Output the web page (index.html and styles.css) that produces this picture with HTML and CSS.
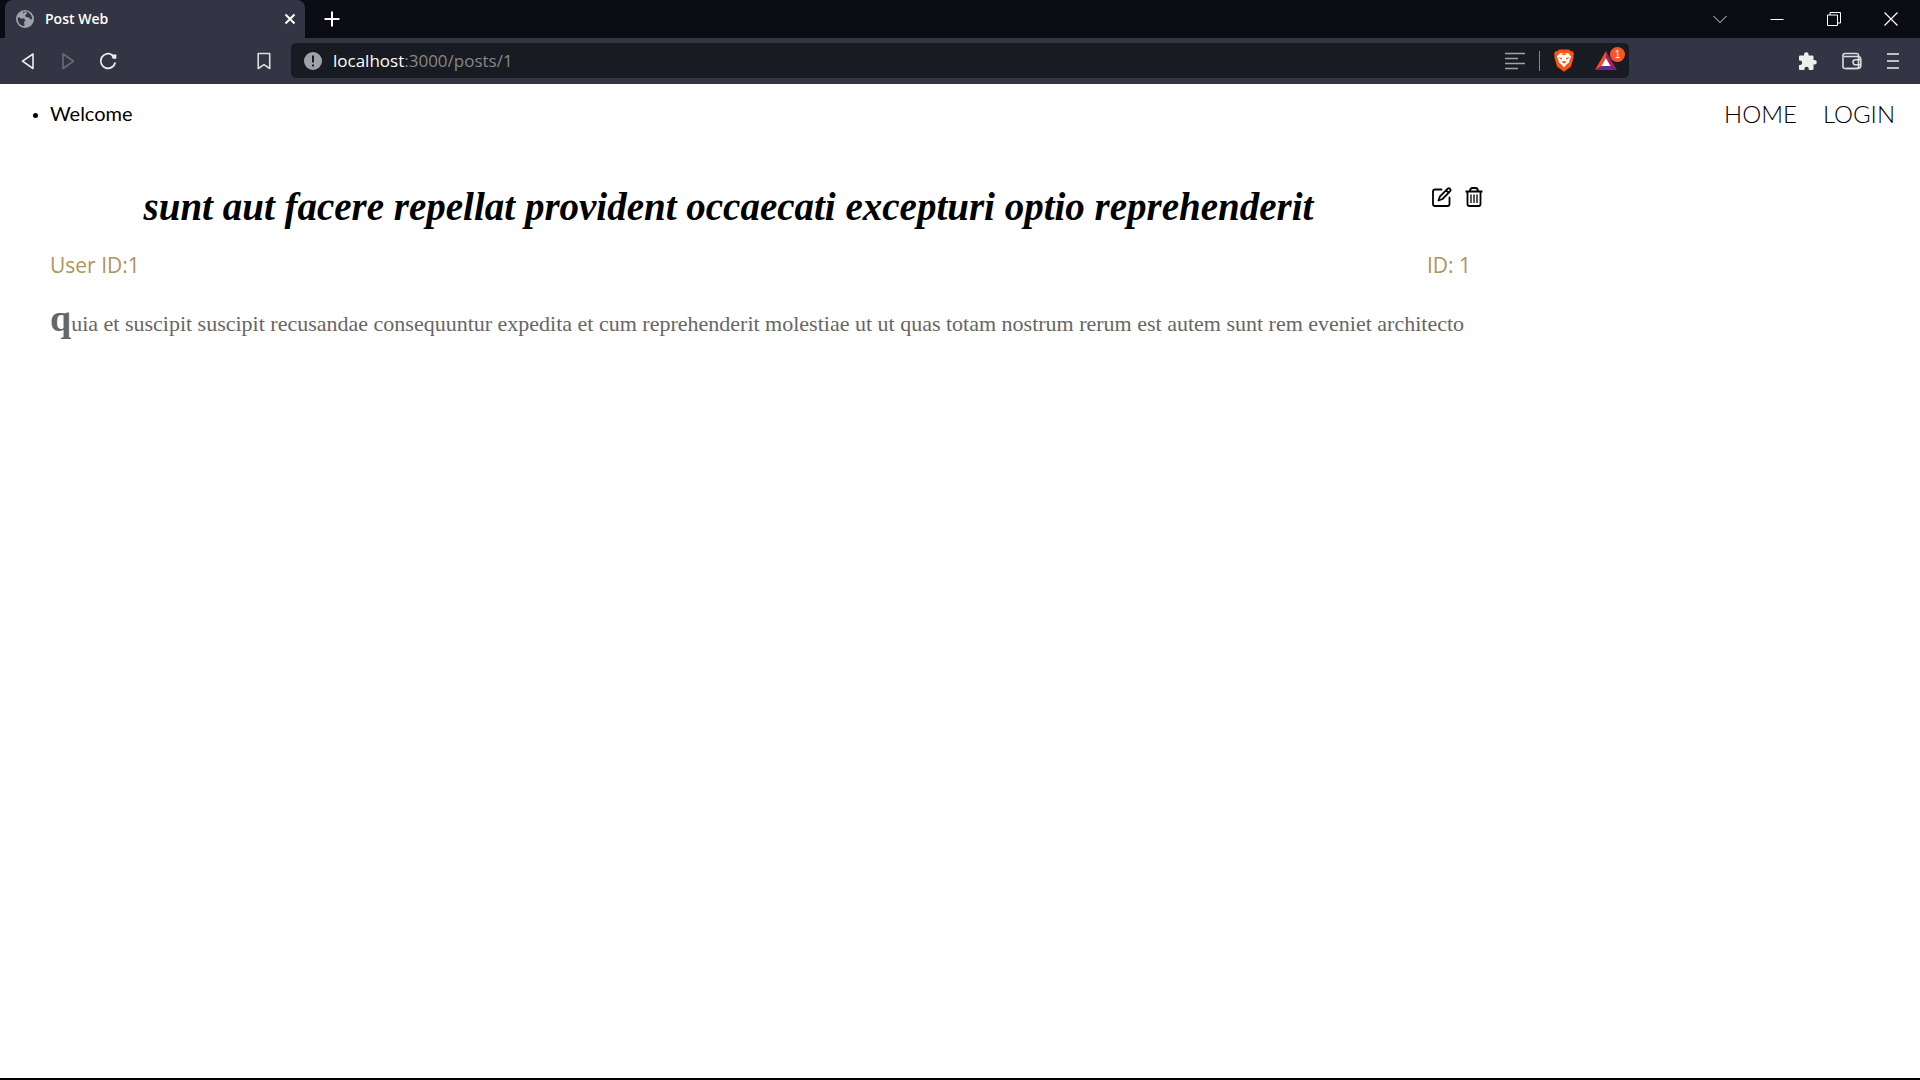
FILE: index.html
```html
<!DOCTYPE html>
<html lang="en">
<head>
<meta charset="utf-8">
<title>Post Web</title>
<link rel="stylesheet" href="styles.css">
</head>
<body>
<header class="browser">
  <div class="tabs">
    <div class="tab">
      <svg class="icon" width="18" height="18" viewBox="0 0 18 18"><circle cx="9" cy="9" r="9" fill="#a0a2aa"/><path d="M2 7L5 8.500 8 8.500 9.500 10.500 8 12 8.500 16C5 16 2 13.500 1.800 9zM7 1.800L10 1.500 11 3.500 9 5.500 10 7 13 7.500 14.500 9.500 16.200 9C16 5 13 2 10 1.500L7 3.500z" fill="#333544"/></svg>
      <span class="tab-title">Post Web</span>
      <button class="tool" aria-label="Close tab"><svg width="12" height="12" viewBox="0 0 12 12" fill="none" stroke="#fff" stroke-width="2"><path d="M1.500 1.500l9 9M10.500 1.500l-9 9"/></svg></button>
    </div>
    <button class="tool new-tab" aria-label="New tab"><svg width="16" height="16" viewBox="0 0 16 16" fill="none" stroke="#fff" stroke-width="2"><path d="M8 .5v15M.5 8h15"/></svg></button>
    <div class="window-controls">
      <button class="tool" aria-label="Search tabs"><svg width="14" height="14" viewBox="0 0 14 14" fill="none" stroke="#ddd"><path d="M.5 4L7 10.500 13.500 4"/></svg></button>
      <button class="tool" aria-label="Minimize"><svg width="14" height="14" viewBox="0 0 14 14" fill="none" stroke="#fff"><path d="M.5 7.500h13"/></svg></button>
      <button class="tool" aria-label="Restore"><svg width="14" height="14" viewBox="0 0 14 14" fill="none" stroke="#fff"><path d="M.5 3h10v10.500H.500zM3 3V.500h10.500V11h-3"/></svg></button>
      <button class="tool" aria-label="Close"><svg width="14" height="14" viewBox="0 0 14 14" fill="none" stroke="#fff" stroke-width="1.200"><path d="M.5.5l13 13M13.500.5l-13 13"/></svg></button>
    </div>
  </div>
  <div class="toolbar">
    <nav class="history" aria-label="History">
      <button class="tool" aria-label="Back"><svg width="18" height="18" viewBox="0 0 18 18" fill="none" stroke="#eee" stroke-width="1.600" stroke-linejoin="round"><path d="M14 2v14.500L3.500 9.200z"/></svg></button>
      <button class="tool" aria-label="Forward"><svg width="18" height="18" viewBox="0 0 18 18" fill="none" stroke="#6a6c78" stroke-width="1.600" stroke-linejoin="round"><path d="M4 2v14.500L14.500 9.200z"/></svg></button>
      <button class="tool" aria-label="Reload"><svg width="18" height="18" viewBox="0 0 18 18" fill="none" stroke="#eee" stroke-width="1.800"><path d="M13.500 3.200A7.300 7.300 0 1 0 16.200 10.500"/><path d="M12 2.500h5.300v4.300h-3.600z" fill="#eee" stroke="none"/></svg></button>
    </nav>
    <button class="tool bookmark" aria-label="Bookmark"><svg width="14" height="18" viewBox="0 0 14 18" fill="none" stroke="#ddd" stroke-width="1.600" stroke-linejoin="round"><path d="M1.200 1.500h11.500V16.500L7 12.700 1.200 16.500z"/></svg></button>
    <div class="address">
      <svg class="icon" width="18" height="18" viewBox="0 0 18 18"><circle cx="9" cy="9" r="9" fill="#a0a2aa"/><path d="M9 3.500v7M9 12.500v2" stroke="#191b22" stroke-width="2"/></svg>
      <a class="url" href="#"><span class="host">localhost</span>:3000/posts/1</a>
      <div class="address-tools">
        <button class="tool" aria-label="Reader mode"><svg width="20" height="18" viewBox="0 0 20 18" fill="none" stroke="#a0a2a5" stroke-width="1.600"><path d="M0 1.500h20M0 6.500h13M0 11.500h20M0 16.500h13"/></svg></button>
        <span class="divider"></span>
        <button class="tool shield" aria-label="Shields"><svg width="20" height="23" viewBox="0 0 20 23"><path d="M5 .5h10l1.800 1.800 1.700-.2 1.500 2.900-.7 2 .3 1.500-2.700 9.300L10 22.700 3.100 17.800.400 8.500.700 7 0 5l1.500-2.900 1.700.2z" fill="#fb5412"/><path d="M6 4l4 .8 4-.8 3.200 3.600-1.500 3.200-.8 3-2 1.200L10 18.600 7.100 15l-2-1.200-.8-3-1.500-3.200z" fill="#fff"/><path d="M4.300 8.200l3.900.8-.8 1.700zM15.700 8.200l-3.900.8.8 1.700zM7.500 13l2.500 1.600 2.500-1.600-2.500-1.200zM7 5h6l-3 1.300z" fill="#fb5412"/></svg></button>
        <button class="tool rewards" aria-label="Rewards, 1 new"><svg width="22" height="19" viewBox="0 0 22 19"><path d="M11 0L0 19l7-4 4-8z" fill="#ff4724"/><path d="M11 0l11 19-7-4-4-8z" fill="#9e1f63"/><path d="M0 19h22l-7-4H7z" fill="#662d91"/><path d="M11 7l4.500 8h-9z" fill="#fff"/></svg><span class="badge">1</span></button>
      </div>
    </div>
    <div class="extras">
      <button class="tool" aria-label="Extensions"><svg width="18" height="18" viewBox="0 0 18 18" fill="#eee"><path d="M0 4.500Q0 3.500 1 3.500H5V2.500a2.300 2.300 0 0 1 4.600 0v1H13.500Q14.500 3.500 14.500 4.500V8h1a2.300 2.300 0 0 1 0 4.600h-1V17q0 1-1 1H9.800v-1a2.200 2.200 0 0 0-4.400 0v1H1q-1 0-1-1v-4h1a2.200 2.200 0 0 0 0-4.400H0z"/></svg></button>
      <button class="tool" aria-label="Wallet"><svg width="20" height="18" viewBox="0 0 20 18" fill="none" stroke="#ddd" stroke-width="1.600"><rect x="1" y="1.500" width="15.500" height="15" rx="2"/><path d="M2 4.500h14q2.800 0 2.800 3v6q0 3-3 3H4M18.500 7.800h-5a2.500 2.500 0 0 0 0 5h5"/></svg></button>
      <button class="tool" aria-label="Menu"><svg width="12" height="18" viewBox="0 0 12 18" fill="none" stroke="#eee" stroke-width="1.600"><path d="M0 2h12M0 9h12M0 16h12"/></svg></button>
    </div>
  </div>
</header>
<div class="page">
  <nav class="site-nav" aria-label="Main">
    <ul class="welcome"><li>Welcome</li></ul>
    <div class="links"><a href="#">HOME</a><a href="#">LOGIN</a></div>
  </nav>
  <main class="post">
    <div class="post-head">
      <h1>sunt aut facere repellat provident occaecati excepturi optio reprehenderit</h1>
      <div class="actions">
        <button class="tool" aria-label="Edit post"><svg width="20" height="20" viewBox="0 0 20 20" fill="none" stroke="#000" stroke-width="1.800" stroke-linejoin="round" stroke-linecap="round"><path d="M9.500 2.500H3q-2 0-2 2V17q0 2 2 2h12.500q2 0 2-2v-6.500"/><path d="M6.500 13.500L8 9.300 15.500 1.800q1.200-1.200 2.500 0t0 2.500L10.500 12zM14 3.200l2.600 2.600"/></svg></button>
        <button class="tool" aria-label="Delete post"><svg width="18" height="20" viewBox="0 0 18 20" fill="none" stroke="#000" stroke-width="1.800" stroke-linejoin="round"><path d="M.5 4.500h17M5 4.500Q5 1 7.500 1h3Q13 1 13 4.500M2.500 4.500V17q0 2 2 2h9q2 0 2-2V4.500"/><path d="M6 7.500V16M9 7.500V16M12 7.500V16" stroke-width="1.300"/></svg></button>
      </div>
    </div>
    <div class="meta"><span>User ID:1</span><span class="post-id">ID: 1</span></div>
    <p class="text">quia et suscipit suscipit recusandae consequuntur expedita et cum reprehenderit molestiae ut ut quas totam nostrum rerum est autem sunt rem eveniet architecto</p>
  </main>
</div>
</body>
</html>
```
FILE: styles.css
```css
* { box-sizing: border-box; }
body {
  margin: 0;
  min-height: 100vh;
  display: flex;
  flex-direction: column;
  background: #fff;
  border-bottom: 2px solid #000;
  font-family: Lato, sans-serif;
}
.tool {
  display: flex;
  align-items: center;
  justify-content: center;
  padding: 0;
  border: 0;
  background: none;
  cursor: pointer;
}
.icon { flex: none; }

/* Browser bars */
.browser { font-family: "Open Sans", sans-serif; background: #333544; }
.tabs { display: flex; height: 38px; padding-left: 5px; background: #0b0b14; }
.tab {
  display: flex;
  align-items: center;
  gap: 11px;
  width: 300px;
  padding: 0 9px 0 11px;
  border-radius: 8px 8px 0 0;
  background: #333544;
}
.tab-title { flex: 1; padding-bottom: 2px; color: #fff; font-size: 14px; font-weight: 600; }
.new-tab { margin-left: 19px; }
.window-controls { display: flex; gap: 43px; margin-left: auto; padding-right: 22px; }
.toolbar { display: flex; align-items: center; height: 46px; padding: 0 21px 1px 0; }
.history { display: flex; gap: 22px; padding-left: 19px; }
.bookmark { margin-left: 140px; }
.address {
  display: flex;
  align-items: center;
  flex: 1;
  gap: 11px;
  height: 35px;
  margin-left: 20px;
  padding: 0 4px 0 13px;
  border-radius: 5px;
  background: #191b22;
}
.url { color: #85878b; font-size: 17px; text-decoration: none; }
.host { color: #fff; }
.address-tools { display: flex; align-items: center; margin-left: auto; }
.divider { width: 1px; height: 20px; margin: 0 14px; background: #85878b; }
.rewards { position: relative; margin-left: 21px; padding-right: 8px; }
.badge {
  position: absolute;
  top: -4px;
  right: 0;
  width: 15px;
  height: 15px;
  border-radius: 50%;
  background: #fb542b;
  color: #fff;
  font-size: 10px;
  line-height: 15px;
}
.extras { display: flex; gap: 25px; padding-left: 170px; }

/* Page */
.site-nav {
  display: flex;
  align-items: center;
  justify-content: space-between;
  height: 58px;
  padding: 0 25px 0 50px;
}
.welcome { margin: 0; padding: 0; font-size: 20px; }
.welcome li::marker { font-size: 15px; }
.links { display: flex; gap: 26px; }
.links a { color: #000; font-size: 24px; font-weight: 300; text-decoration: none; }
.post { max-width: 1545px; padding: 42px 50px 0; }
.post-head { display: flex; gap: 20px; }
h1 {
  flex: 1;
  margin: 0;
  font: italic bold 39px/46px "Liberation Serif", serif;
  text-align: center;
}
.actions { display: flex; align-items: flex-start; gap: 13px; width: 68px; padding: 3px 0 0 5px; }
.meta {
  display: flex;
  justify-content: space-between;
  margin-top: 20px;
  color: #b1935b;
  font: 21px/30px "Open Sans", sans-serif;
}
.post-id { width: 68px; }
.text {
  margin: 15px 0 0;
  color: #666;
  font: 22px/46px "Liberation Serif", serif;
}
.text::first-letter { font-size: 38px; font-weight: bold; }
```
